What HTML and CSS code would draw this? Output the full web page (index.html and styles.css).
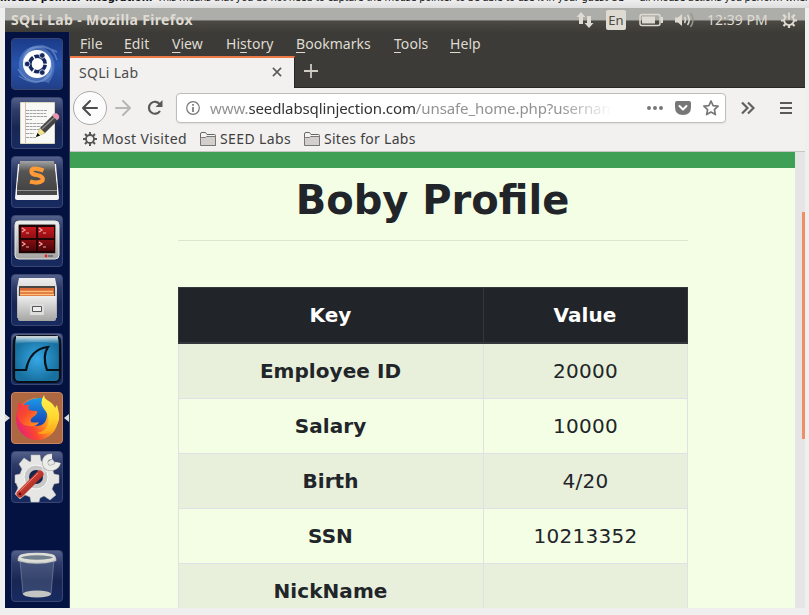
FILE: index.html
```html
<!DOCTYPE html>
<html lang="en">
<head>
<meta charset="utf-8">
<title>SQLi Lab</title>
<link rel="stylesheet" href="styles.css">
</head>
<body>
<svg width="0" height="0" class="defs"><defs>
<linearGradient id="metal" x2="0" y2="1"><stop stop-color="#eee"/><stop offset="1" stop-color="#a5a5a3"/></linearGradient>
<linearGradient id="dark" x2="0" y2="1"><stop stop-color="#a4a4a4"/><stop offset=".35" stop-color="#555"/><stop offset="1" stop-color="#444"/></linearGradient>
<linearGradient id="red" x2="0" y2="1"><stop stop-color="#c9181c"/><stop offset="1" stop-color="#4c0508"/></linearGradient>
<radialGradient id="sea"><stop stop-color="#37a8e6"/><stop offset="1" stop-color="#17709f"/></radialGradient>
<linearGradient id="shine" x2="0" y2="1"><stop stop-color="#fff" stop-opacity=".85"/><stop offset="1" stop-color="#fff" stop-opacity="0"/></linearGradient>
<linearGradient id="fox" x1="1" y1=".2" x2="0" y2=".7"><stop stop-color="#ffe83d"/><stop offset=".35" stop-color="#ffa51e"/><stop offset=".7" stop-color="#fb4331"/><stop offset="1" stop-color="#e5207a"/></linearGradient>
<linearGradient id="face" x2="1" y2="1"><stop stop-color="#f2304e"/><stop offset=".45" stop-color="#fb4a2d"/><stop offset="1" stop-color="#ff9a1e"/></linearGradient>
<linearGradient id="flame" x2="0" y2="1"><stop stop-color="#fff44f"/><stop offset=".6" stop-color="#ffd52e"/><stop offset="1" stop-color="#ffa01a"/></linearGradient>
<linearGradient id="globe" x2="0" y2="1"><stop stop-color="#1c9ae8"/><stop offset="1" stop-color="#1440b4"/></linearGradient>
<linearGradient id="wrench" x2="1" y2="1"><stop stop-color="#ef5b4b"/><stop offset="1" stop-color="#8f1612"/></linearGradient>
</defs></svg>
<div class="outer-text"><b>mouse pointer integration.</b><span>This means that you do not need to capture the mouse pointer to be able to use it in your guest OS — all mouse actions you perform when</span></div>
<div class="desktop">
  <header class="panel">
    <span class="panel-title">SQLi Lab - Mozilla Firefox</span>
    <div class="indicators">
      <svg width="18" height="18" viewBox="0 0 18 18"><path fill="#dfdbd2" d="M5 1l4.500 5H7v7H3V6H.500zM13 17l-4.500-5H11V5h4v7h2.500z"/></svg>
      <span class="lang">En</span>
      <svg width="24" height="14" viewBox="0 0 24 14"><rect x="1" y="1.500" width="20" height="11" rx="2" fill="none" stroke="#dfdbd2" stroke-width="1.500"/><path fill="#dfdbd2" d="M3 3.500h13v7H3zM22 4h2v6h-2z"/></svg>
      <svg width="20" height="18" viewBox="0 0 20 18"><path fill="#dfdbd2" d="M0 6.500h3l4-3.500v12l-4-3.500H0z"/><path fill="none" stroke="#dfdbd2" stroke-width="1.500" d="M9.500 6q2 3 0 6M12.500 4q3.500 5 0 10"/><path fill="none" stroke="#96958f" stroke-width="1.500" d="M15.500 2q5 7 0 14"/></svg>
      <span class="clock">12:39 PM</span>
      <svg width="16" height="16" viewBox="0 0 16 16"><g stroke="#dfdbd2" fill="none"><path stroke-width="1.800" d="M5.500 4.200A4.800 4.800 0 1 0 10.500 4.200M8 .5v7"/><path stroke-width="2.200" d="M2.200 2.600l2 2M13.800 2.600l-2 2M0 8.500h3.200M12.800 8.500H16M2.500 14l2-2M13.500 14l-2-2M8 13v3"/></g></svg>
    </div>
  </header>
  <div class="workspace">
    <nav class="launcher">
      <div class="tile dash"><svg viewBox="0 0 52 52"><g fill="none" stroke="#a9c5f4" stroke-width="1.500" opacity=".4"><path d="M12 24Q14 7 32 8Q43 10 46 22M39 22Q45 41 26 44Q13 43 7 31M14 19Q22 2 46 14M38 35Q29 52 8 38"/></g><path fill="#8bb2ec" opacity=".35" d="M8 25C9 9 28 2 39 15Q49 29 37 46Q38 43 26 44Q7 42 8 25z"/><circle cx="26" cy="26" r="14" fill="#fff"/><circle cx="26.500" cy="26" r="7.700" fill="none" stroke="#162a62" stroke-width="3.600" stroke-dasharray="14.630 1.500" stroke-dashoffset="-.75"/><g fill="#162a62" stroke="#fff" stroke-width=".7"><circle cx="16.200" cy="26" r="2.800"/><circle cx="31.200" cy="17.500" r="2.800"/><circle cx="31.200" cy="34.500" r="2.800"/></g></svg></div>
      <div class="tile"><svg viewBox="0 0 52 52"><path fill="#f8f8f5" stroke="#d8d5bd" d="M9.500 5.500h34v41h-34z"/><path stroke="#d7bbb9" d="M14.500 6v40"/><g stroke="#a0a3a6" stroke-dasharray="3 .6"><path d="M15 13.500h21M15 16.500h20M15 19.500h21M15 22.500h6M15 26.500h21M15 29.500h20M15 32.500h13M15 36.500h8M15 40.500h10"/></g><path fill="#444" d="M25 40l4-9 14-14 5 5-14 14z"/><path stroke="#8b8b8b" stroke-width="1.500" d="M31 32l14-13"/><path fill="#f0e58b" d="M25 40l4-9 5 5z"/><path d="M25 40l1.500-4 2.500 2.500z"/><path fill="#bbb" d="M41 18l2-2 5 5-2 2z"/><path fill="#ed93b0" d="M43 17l2-1q4 2 3 5l-2 2-4-4z"/></svg></div>
      <div class="tile"><svg viewBox="0 0 52 52"><path fill="#f4f4f4" d="M7 8h38l3 34q0 2-2 2H6q-2 0-2-2z"/><path fill="#484848" d="M9 5h34l3 28v6H6v-6z"/><path fill="url(#dark)" d="M9 5h34l3 29H6z"/><path stroke="#929292" d="M6 34.500h40"/><path fill="none" stroke="#ff9a36" stroke-width="4.200" d="M32.500 14.500Q20 10 20.500 16Q21 18.500 26 19Q33 20.500 31.500 24.500Q28 28 19 25.500"/></svg></div>
      <div class="tile"><svg viewBox="0 0 52 52"><rect x="4" y="6" width="44" height="38" rx="4" fill="url(#metal)" stroke="#e8e8e1"/><rect x="7" y="9" width="38" height="30" rx="2" fill="#8b8a84"/><path fill="#210406" d="M8 10h36v28H8z"/><path fill="url(#red)" d="M10 12h15v11H10zM27 12h16v11H27zM10 25h15v11H10zM27 25h16v11H27z"/><g fill="none" stroke="#f2a5a5" stroke-width="1.200"><path d="M11 13l3 2-3 2M15 18h3M28 13l3 2-3 2M32 18h3M11 27l3 2-3 2M15 32h3M28 27l3 2-3 2M32 32h3"/></g><circle cx="35" cy="41" r="1.400" fill="#e22"/><path fill="#777" d="M37 40h5v2h-5z"/></svg></div>
      <div class="tile"><svg viewBox="0 0 52 52"><path fill="url(#metal)" d="M8 4h36l2 10v30H6V14z"/><path fill="#494642" d="M8 12h36v11H8z"/><path fill="#d86835" d="M9 14h34v9H9z"/><path stroke="#ffc177" stroke-width="1.500" d="M9 17.500h33M9 20.500h34"/><path fill="url(#metal)" d="M7 22h38v23q0 2-2 2H9q-2 0-2-2z"/><rect x="19" y="30" width="14" height="11" rx="1" fill="#ddd"/><path fill="#eee" stroke="#555" d="M21.500 32.500h9v5h-9z"/></svg></div>
      <div class="tile"><svg viewBox="0 0 52 52"><rect x="3" y="3" width="46" height="46" rx="5" fill="url(#sea)" stroke="#080e12" stroke-width="2.200"/><path fill="url(#shine)" d="M5 3h42v8Q26 7 5 11z"/><path fill="none" stroke="#071219" stroke-width="2.200" d="M4 37h11q4-21 22-23-6 9-1 23h12"/></svg></div>
      <div class="tile active"><svg viewBox="0 0 52 52"><circle cx="26" cy="27" r="21" fill="url(#fox)"/><path fill="url(#globe)" d="M13 12Q20 5 31 6L36 22Q36 34 25 34 17 32 15 22z"/><path fill="url(#face)" d="M8 10q2 1 4 4 3-2 6-1-1 3 0 5 3 1 8 1 1 3-4 6-3 2-2 5 4 1 8 0-2 5-10 4l-5-1Q3 27 8 10z"/><path fill="url(#flame)" d="M33 3q-5 8 0 14 6 6 4 15-2 8-11 9 10 3 17-4 8-9 4-20l-1-4-2 3Q42 11 36 8q-3-2-3-5z"/></svg></div>
      <div class="tile"><svg viewBox="0 0 52 52"><g fill="#e6e6e4" stroke="#bbb" stroke-width=".5"><path d="M20 4h9l1 6 5 2 6-4 5 6-4 6 1 3 5 1v8l-5 1-2 5 4 6-6 5-6-4-4 2-1 4h-8l-1-5-5-2-5 4-5-5 3-6-2-5H4v-8l5-1 2-5-3-5 5-6 6 4 1-1z"/></g><circle cx="25" cy="26" r="12" fill="#c8c8c8" stroke="#f8f8f8"/><circle cx="25" cy="26" r="7" fill="#15254e"/><path stroke="#d9d9d9" stroke-width="5" d="M28 24l9-9"/><path fill="none" stroke="#999" stroke-width="6" d="M41 5.500q-7 0-7 6 1 7 8 5 4-1 5-5"/><path fill="none" stroke="#ecece8" stroke-width="5" d="M41 5.500q-7 0-7 6 1 7 8 5 4-1 5-5"/><path stroke="url(#wrench)" stroke-width="7" stroke-linecap="round" d="M9 43l20-20"/><path stroke="#ef8170" stroke-width="1" d="M9 40l18-18"/><circle cx="9" cy="43" r="1.300" fill="#520e0e"/></svg></div>
      <div class="tile trash"><svg viewBox="0 0 52 52"><path fill="#a7bbcc" fill-opacity=".2" stroke="#a7b8c9" stroke-opacity=".4" d="M9 10l3 34q14 5 28 0l3-34z"/><ellipse cx="26" cy="44" rx="14" ry="3.500" fill="#c2c5c2"/><path fill="none" stroke="#c4c4c2" stroke-width="2.500" d="M8 8v2q18 5 36 0V8"/><ellipse cx="26" cy="7.500" rx="17.500" ry="3.500" fill="#73808e" stroke="#deded9" stroke-width="2.500"/></svg></div>
    </nav>
    <section class="browser">
      <div class="menubar"><span class="m1"><u>F</u>ile</span><span class="m2"><u>E</u>dit</span><span class="m3"><u>V</u>iew</span><span class="m4">Hi<u>s</u>tory</span><span class="m5"><u>B</u>ookmarks</span><span class="m6"><u>T</u>ools</span><span><u>H</u>elp</span></div>
      <div class="tabs"><div class="tab"><span>SQLi Lab</span><svg width="10" height="10" viewBox="0 0 11 11"><path stroke="#5a5956" stroke-width="1.700" d="M1 1l9 9M10 1l-9 9"/></svg></div><svg class="plus" width="14" height="14" viewBox="0 0 14 14"><path stroke="#d0ccc4" stroke-width="1.800" d="M7 0v14M0 7h14"/></svg></div>
      <div class="toolbar">
        <span class="back"><svg width="16" height="16" viewBox="0 0 16 16"><path fill="none" stroke="#4c4c4b" stroke-width="2" stroke-linecap="round" stroke-linejoin="round" d="M8 1L1 8l7 7M1 8h14"/></svg></span>
        <svg class="forward" width="16" height="16" viewBox="0 0 16 16"><path fill="none" stroke="#b8b7b6" stroke-width="2" stroke-linecap="round" stroke-linejoin="round" d="M8 1l7 7-7 7M15 8H1"/></svg>
        <svg class="reload" width="16" height="16" viewBox="0 0 16 16"><path fill="none" stroke="#595958" stroke-width="2.200" d="M13 11A6 6 0 1 1 13 4.500"/><path fill="#595958" d="M15.500 0v7h-7z"/></svg>
        <div class="address">
          <svg width="14" height="14" viewBox="0 0 14 14"><circle cx="7" cy="7" r="6.300" fill="none" stroke="#777" stroke-width="1.200"/><path stroke="#777" stroke-width="1.700" d="M7 3v1.700M7 6v5"/></svg>
          <span class="url">www.<b>seedlabsqlinjection.com</b>/unsafe_home.php?usernam</span>
          <svg class="dots" width="16" height="6" viewBox="0 0 16 6"><path stroke="#777" stroke-width="4" stroke-linecap="round" d="M2 3h0M8 3h0M14 3h0"/></svg>
          <svg class="pocket" width="16" height="14" viewBox="0 0 16 14"><path fill="#777" d="M2 0h12q2 0 2 2v4q0 8-8 8T0 6V2q0-2 2-2z"/><path fill="none" stroke="#fff" stroke-width="2" stroke-linecap="round" stroke-linejoin="round" d="M4.500 5L8 8.500 11.500 5"/></svg>
          <svg class="star" width="16" height="16" viewBox="0 0 16 16"><path fill="none" stroke="#777" stroke-width="1.700" stroke-linejoin="round" d="M8 1l2.100 4.600 5 .6-3.700 3.400 1 5L8 12.100 3.600 14.600l1-5L.9 6.200l5-.6z"/></svg>
        </div>
        <svg class="more" width="14" height="14" viewBox="0 0 14 14"><path fill="none" stroke="#626160" stroke-width="2.200" d="M1 1.500L6.500 7 1 12.500M7 1.500L12.500 7 7 12.500"/></svg>
        <i></i>
        <svg class="burger" width="12" height="12" viewBox="0 0 12 12"><path stroke="#595958" stroke-width="2" d="M0 1h12M0 6h12M0 11h12"/></svg>
      </div>
      <div class="bookmarks">
        <svg width="14" height="14" viewBox="0 0 14 14"><circle cx="7" cy="7" r="4" fill="none" stroke="#555" stroke-width="1.800"/><path stroke="#555" stroke-width="2" d="M7 0v3M7 11v3M0 7h3M11 7h3M2 2l2 2M10 10l2 2M12 2l-2 2M4 10l-2 2"/></svg><span class="b1">Most Visited</span>
        <svg width="16" height="14" viewBox="0 0 16 14"><path fill="#f4f3f2" stroke="#666" d="M.5 12V2Q.5.500 2 .5h3.500l1.500 2h7.500q1 0 1 1V13.500H1.500q-1 0-1-1.500z"/><path fill="#d2cfcd" stroke="#777" d="M.5 13.500v-7q0-1 1-1h4l1-1h9v9z"/></svg><span class="b2">SEED Labs</span>
        <svg width="16" height="14" viewBox="0 0 16 14"><path fill="#f4f3f2" stroke="#666" d="M.5 12V2Q.5.500 2 .5h3.500l1.500 2h7.500q1 0 1 1V13.500H1.500q-1 0-1-1.500z"/><path fill="#d2cfcd" stroke="#777" d="M.5 13.500v-7q0-1 1-1h4l1-1h9v9z"/></svg><span class="b3">Sites for Labs</span>
      </div>
      <div class="viewport">
        <main>
          <h1>Boby Profile</h1>
          <hr>
          <table>
            <thead><tr><th>Key</th><th>Value</th></tr></thead>
            <tbody>
              <tr><th>Employee ID</th><td>20000</td></tr>
              <tr><th>Salary</th><td>10000</td></tr>
              <tr><th>Birth</th><td>4/20</td></tr>
              <tr><th>SSN</th><td>10213352</td></tr>
              <tr><th>NickName</th><td></td></tr>
            </tbody>
          </table>
        </main>
        <div class="scrollbar"><div></div></div>
      </div>
    </section>
  </div>
</div>
</body>
</html>
```
FILE: styles.css
```css
* { box-sizing: border-box; }
body { margin: 0; width: 809px; height: 615px; overflow: hidden; background: #efefef; font-family: "Noto Sans", sans-serif; }
.defs { position: absolute; }
svg { flex: none; display: block; }
.outer-text { height: 8px; overflow: hidden; display: flex; font: 10px/12px "DejaVu Sans", sans-serif; white-space: nowrap; color: #111; background: linear-gradient(#eee, #dfdfdf); }
.outer-text b, .outer-text span { margin-top: -8px; }
.outer-text b { width: 157px; flex: none; letter-spacing: .02px; }
.outer-text span { letter-spacing: -.33px; }
.desktop { width: 800px; height: 600px; margin-left: 5px; overflow: hidden; }
.panel { height: 24px; display: flex; justify-content: space-between; align-items: center; padding: 0 8px 0 6px; color: #dfdbd2; background: linear-gradient(#adada9 0 11px, #aaa9a5 12px, #777670 12px 13px, #4a4943 13px, #3d3c37); }
.panel-title { font-weight: bold; font-size: 14px; line-height: 20px; letter-spacing: .35px; margin-top: -1px; }
.indicators { display: flex; align-items: center; }
.lang { width: 20px; height: 20px; margin: 0 13px 0 12px; border-radius: 2px; background: #dfdbd2; color: #4b4a45; font-size: 13px; line-height: 20px; text-align: center; }
.indicators svg:nth-of-type(3) { margin-left: 12px; }
.clock { width: 61px; margin: 0 13px 0 12px; font-size: 14px; line-height: 20px; white-space: nowrap; margin-top: -1px; }
.workspace { display: flex; height: 576px; }
.launcher { width: 65px; flex: none; padding: 6px 0 0 6px; display: flex; flex-direction: column; gap: 7px; background: #041241; border-right: 1px solid #373d59; }
.tile { width: 52px; height: 52px; flex: none; border-radius: 4px; border: 1px solid #3a4670; background: linear-gradient(#53608a, #2e3b68 25%, #182653 60%, #172b61); position: relative; }
.tile svg { width: 52px; height: 52px; margin: -1px; }
.dash { background: linear-gradient(#1b3b89, #2855ad 50%, #213f88); }
.active { background: #ad6842; border-color: #c7845e; }
.active::before, .active::after { content: ""; position: absolute; top: 21px; border: 4px solid transparent; }
.active::before { left: -7px; border-left: 5px solid #ddd; border-right: 0; }
.active::after { right: -7px; border-right: 5px solid #ddd; border-left: 0; }
.trash { margin-top: 40px; }
.browser { width: 735px; display: flex; flex-direction: column; }
.menubar { height: 23px; background: #3c3b37; color: #dfdbd2; font-size: 14px; line-height: 23px; display: flex; padding-left: 10px; letter-spacing: .05px; }
.menubar u { text-underline-offset: 3px; text-decoration-thickness: 1px; }
.m1 { width: 44px; } .m2 { width: 48px; } .m3 { width: 54px; } .m4 { width: 70px; } .m5 { width: 98px; } .m6 { width: 56px; }
.tabs { height: 33px; flex: none; display: flex; background: #3c3b37; border-bottom: 1px solid #282724; }
.tab { width: 225px; height: 33px; margin-top: 1px; border-top: 2px solid #ef7847; border-right: 1px solid #282724; background: #f2f1f0; display: flex; justify-content: space-between; align-items: center; padding: 0 12px 3px 9px; font-size: 14px; letter-spacing: .3px; color: #4c4c4c; }
.plus { margin: 9px 0 0 9px; }
.toolbar { height: 41px; flex: none; background: #f2f1f0; display: flex; align-items: center; padding: 0 13px 2px 3px; }
.back { width: 34px; height: 34px; flex: none; border: 1px solid #aaa; border-radius: 50%; background: #fcfcfc; display: grid; place-items: center; }
.forward { margin-left: 8px; }
.reload { margin-left: 16px; }
.address { width: 550px; height: 30px; margin-left: 13px; border: 1px solid #bebdba; border-radius: 4px; background: #fff; display: flex; align-items: center; padding: 0 6px 0 9px; box-shadow: 0 1px 2px #0001; }
.url { width: 402px; margin-left: 10px; white-space: nowrap; font-size: 15px; letter-spacing: -.1px; color: #929292; mask-image: linear-gradient(to right, #000 350px, transparent 402px); }
.url b { font-weight: normal; color: #333; }
.dots { margin-left: 35px; } .pocket { margin-left: 12px; } .star { margin-left: 12px; }
.more { margin-left: 15px; }
.toolbar i { width: 1px; height: 34px; margin-left: 12px; background: #d3d2d0; }
.burger { margin-left: 13px; }
.bookmarks { height: 23px; flex: none; padding: 0 0 2px 13px; display: flex; align-items: center; background: #f2f1f0; border-bottom: 1px solid #c7c6c3; color: #3f3f3f; font-size: 14px; letter-spacing: .38px; white-space: nowrap; }
.b1 { width: 98px; margin-left: 5px; } .b2 { width: 84px; margin-left: 4px; } .b3 { margin-left: 4px; letter-spacing: .28px; }
.bookmarks span { line-height: 20px; }
.viewport { height: 456px; display: flex; overflow: hidden; }
main { width: 725px; border-top: 16px solid #3fa055; background: #f4fee5; color: #212529; font-family: "DejaVu Sans", sans-serif; font-size: 20px; line-height: 30px; }
h1 { margin: 8px 0 16px; font-size: 40px; line-height: 48px; text-align: center; }
hr { width: 510px; height: 1px; margin: 0 auto 46px; border: 0; background: #dbe5cf; }
table { width: 510px; margin: 0 auto 0 108px; border-collapse: collapse; table-layout: fixed; text-align: center; }
th, td { height: 55px; border: 1px solid #dee2e6; padding: 12px; }
th { letter-spacing: .06px; padding-right: 13px; }
td { letter-spacing: .27px; }
th:first-child { width: 305px; }
thead th { background: #212529; color: #fff; border-color: #32383e; border-bottom-width: 2px; }
tbody tr:nth-child(odd) { background: #e8efda; }
.scrollbar { width: 10px; background: #e5e5e5; padding: 60px 0 0 7px; }
.scrollbar div { height: 227px; background: #f08e68; }
```
